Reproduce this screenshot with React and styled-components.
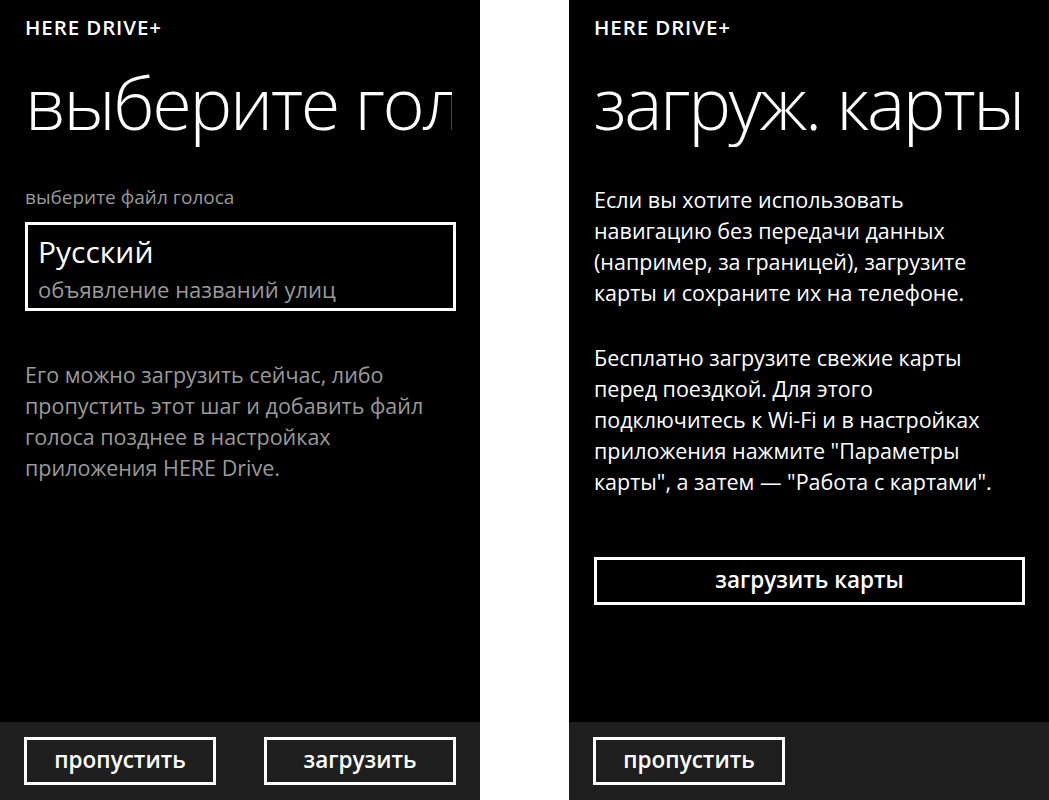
import React from "react";
import styled, { createGlobalStyle } from "styled-components";

const Global = createGlobalStyle`
  html, body { margin: 0; padding: 0; background: #ffffff; }
  body { font-family: "Open Sans", "Noto Sans", sans-serif; }
  * { box-sizing: border-box; }
`;

const Page = styled.div`
  display: flex;
  gap: 89px;
  width: 1049px;
  height: 800px;
  background: #ffffff;
  overflow: hidden;
`;

const Screen = styled.div`
  width: 480px;
  height: 800px;
  background: #000000;
  color: #ffffff;
  display: flex;
  flex-direction: column;
`;

const Body = styled.div`
  flex: 1;
  padding: 0 24px 0 25px;
  display: flex;
  flex-direction: column;
  min-height: 0;
`;

const AppName = styled.div`
  margin-top: 15px;
  font-size: 20.5px;
  line-height: 24px;
  font-weight: 600;
  letter-spacing: 0.9px;
`;

const Title = styled.h1`
  margin: 18px 4px 0 0;
  font-size: 72px;
  line-height: 90px;
  font-weight: 300;
  white-space: nowrap;
  overflow: hidden;
  letter-spacing: -2.3px;
`;

const Label = styled.div`
  margin-top: 37px;
  font-size: 19px;
  line-height: 26px;
  color: #9a9a9a;
`;

const PickerBox = styled.div`
  margin-top: 12px;
  border: 3px solid #ffffff;
  height: 89px;
  padding: 8px 11px 0 10px;
`;

const PickerTitle = styled.div`
  font-size: 30px;
  line-height: 38px;
`;

const PickerSub = styled.div`
  margin-top: 3px;
  font-size: 22px;
  line-height: 30px;
  color: #9a9a9a;
`;

const Para = styled.p`
  margin: ${(p) => p.$top || 0}px 0 0 0;
  font-size: 21.5px;
  line-height: 31px;
  color: ${(p) => (p.$muted ? "#9a9a9a" : "#ffffff")};
  white-space: nowrap;
`;

const WideButton = styled.button`
  margin-top: ${(p) => p.$top || 0}px;
  width: 431px;
  height: 48px;
  border: 3px solid #ffffff;
  background: transparent;
  color: #ffffff;
  font-family: inherit;
  font-size: 22.5px;
  font-weight: 600;
  padding: 0 0 3px 0;
`;

const AppBar = styled.div`
  height: 78px;
  background: #1f1f1f;
  display: flex;
  justify-content: space-between;
  padding: 15px 24px 0 24px;
`;

const BarButton = styled.button`
  width: ${(p) => p.$w || 192}px;
  height: 48px;
  border: 3px solid #ffffff;
  background: transparent;
  color: #ffffff;
  font-family: inherit;
  font-size: 22.5px;
  font-weight: 600;
  padding: 0 0 3px 0;
`;

export default function App() {
  return (
    <>
      <Global />
      <Page>
        <Screen>
          <Body>
            <AppName>HERE DRIVE+</AppName>
            <Title>выберите голос</Title>
            <Label>выберите файл голоса</Label>
            <PickerBox>
              <PickerTitle>Русский</PickerTitle>
              <PickerSub>объявление названий улиц</PickerSub>
            </PickerBox>
            <Para $muted $top={48}>
              Его можно загрузить сейчас, либо
              <br />
              пропустить этот шаг и добавить файл
              <br />
              голоса позднее в настройках
              <br />
              приложения HERE Drive.
            </Para>
          </Body>
          <AppBar>
            <BarButton>пропустить</BarButton>
            <BarButton>загрузить</BarButton>
          </AppBar>
        </Screen>
        <Screen>
          <Body>
            <AppName>HERE DRIVE+</AppName>
            <Title>загруж. карты</Title>
            <Para $top={37}>
              Если вы хотите использовать
              <br />
              навигацию без передачи данных
              <br />
              (например, за границей), загрузите
              <br />
              карты и сохраните их на телефоне.
            </Para>
            <Para $top={34}>
              Бесплатно загрузите свежие карты
              <br />
              перед поездкой. Для этого
              <br />
              подключитесь к Wi-Fi и в настройках
              <br />
              приложения нажмите "Параметры
              <br />
              карты", а затем — "Работа с картами".
            </Para>
            <WideButton $top={60}>загрузить карты</WideButton>
          </Body>
          <AppBar>
            <BarButton $w={192}>пропустить</BarButton>
          </AppBar>
        </Screen>
      </Page>
    </>
  );
}
